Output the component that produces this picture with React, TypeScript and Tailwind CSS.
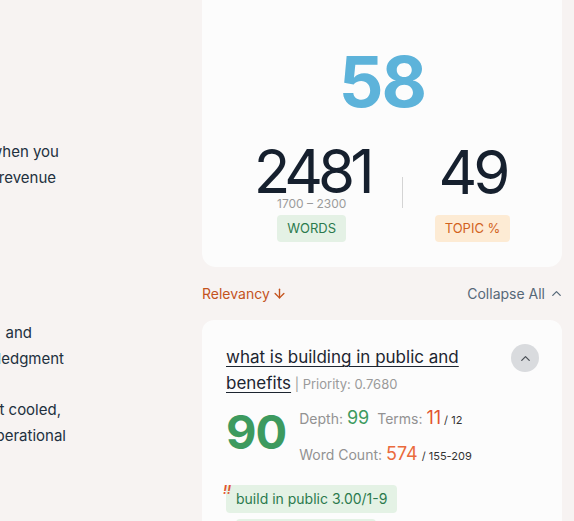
import { ChevronUp, ArrowDown } from 'lucide-react'

const leftLines = [
  { text: 'when you', w: 'w-[59px]', mt: 'mt-[139px]' },
  { text: 'revenue', w: 'w-[56px]', mt: 'mt-0' },
  { text: 'and', w: 'w-[32px]', mt: 'mt-[129px]' },
  { text: 'acknowledgment', w: 'w-[64px]', mt: 'mt-0' },
  { text: 'it cooled,', w: 'w-[61px]', mt: 'mt-[25px]' },
  { text: 'operational', w: 'w-[66px]', mt: 'mt-0' },
]

const App = () => {
  return (
    <div
      className="flex min-h-[521px] w-[574px] overflow-hidden bg-[#f7f3f2] text-[#1c2733]"
      style={{ fontFamily: 'Inter, "Noto Sans", sans-serif' }}
    >
      {/* Editor text, scrolled so only line ends show */}
      <div className="w-[202px] shrink-0 text-[15px] leading-[26px] text-[#22303e]">
        {leftLines.map((line, i) => (
          <div key={i} className={`flex justify-end overflow-hidden whitespace-nowrap ${line.w} ${line.mt}`}>
            <span>{line.text}</span>
          </div>
        ))}
      </div>

      {/* Score panel */}
      <div className="w-[360px] shrink-0">
        <div className="flex h-[267px] flex-col items-center rounded-b-[14px] bg-[#fcfcfc] pt-[47px]">
          <div className="text-[70px] font-bold leading-none tracking-[-2px] text-[#5db3da]">58</div>
          <div className="mt-[24px] flex items-center justify-center gap-8">
            <div className="flex flex-col items-center">
              <div className="text-[60px] leading-none tracking-[-5px] text-[#16202e]">2481</div>
              <div className="-mt-[3px] text-[12px] leading-none text-[#9b9b9b]">1700 – 2300</div>
              <div className="mt-[5px] rounded-[4px] bg-[#e4f1e5] px-[10px] py-[4px] text-[13px] leading-[19px] text-[#2b7a4d]">
                WORDS
              </div>
            </div>
            <div className="mt-[2px] h-[31px] w-px bg-[#d4d4d4]" />
            <div className="flex flex-col items-center">
              <div className="text-[60px] leading-none tracking-[-4px] text-[#16202e]">49</div>
              <div className="mt-[13px] rounded-[4px] bg-[#fdebd4] px-[10px] py-[4px] text-[13px] leading-[19px] text-[#d2621d]">
                TOPIC %
              </div>
            </div>
          </div>
        </div>

        {/* Sort / collapse row */}
        <div className="flex h-[53px] items-center justify-between text-[14px]">
          <div className="flex items-center gap-[2px] text-[#c4531d]">
            Relevancy
            <ArrowDown size={15} strokeWidth={2.2} />
          </div>
          <div className="flex items-center gap-[4px] text-[#566878]">
            Collapse All
            <ChevronUp size={15} strokeWidth={2} className="-mr-[2px]" />
          </div>
        </div>

        {/* Topic card */}
        <div className="rounded-t-[12px] bg-[#fcfcfc] pl-[24px] pr-[23px] pt-[24px] pb-[10px]">
          <div className="flex items-start justify-between">
            <div className="w-[255px] text-[17px] leading-[26px] text-[#1c2530]">
              <span className="underline decoration-1 underline-offset-[3px]">what is building in public and benefits</span>
              <span className="text-[13px] text-[#9a9a9a]"> | Priority: 0.7680</span>
            </div>
            <div className="flex h-[28px] w-[28px] items-center justify-center rounded-full bg-[#d9dbde] text-[#4a4f56]">
              <ChevronUp size={15} strokeWidth={2} />
            </div>
          </div>

          <div className="mt-[2px] flex items-start gap-[13px]">
            <div className="mt-[9px] text-[47px] font-bold leading-none tracking-[-1px] text-[#3d9a5f]">90</div>
            <div className="mt-[9px] flex flex-col gap-[14px] text-[14px] leading-[20px] text-[#929292]">
              <div className="flex items-baseline">
                Depth:&nbsp;<span className="text-[18px] text-[#3d9a5f]">99</span>
                <span className="ml-[8px]">Terms:&nbsp;</span>
                <span className="text-[18px] text-[#e2542f]">11</span>
                <span className="ml-[3px] text-[11px] text-[#333]">/ 12</span>
              </div>
              <div className="flex items-baseline">
                Word Count:&nbsp;<span className="text-[18px] text-[#ea6a3c]">574</span>
                <span className="ml-[4px] text-[11px] text-[#333]">/ 155-209</span>
              </div>
            </div>
          </div>

          <div className="mt-[19px] flex flex-col items-start gap-[6px]">
            <div className="relative rounded-[4px] bg-[#e4f2e5] px-[10px] py-[5px] text-[14px] leading-[18px] text-[#2b7a4d]">
              <span className="absolute -left-[3px] -top-[1px] text-[12px] font-bold italic leading-none text-[#e2542f]">!!</span>
              build in public 3.00/1-9
            </div>
            <div className="ml-[10px] h-[20px] w-[140px] rounded-[4px] bg-[#e4f2e5]" />
          </div>
        </div>
      </div>
    </div>
  )
}

export default App
